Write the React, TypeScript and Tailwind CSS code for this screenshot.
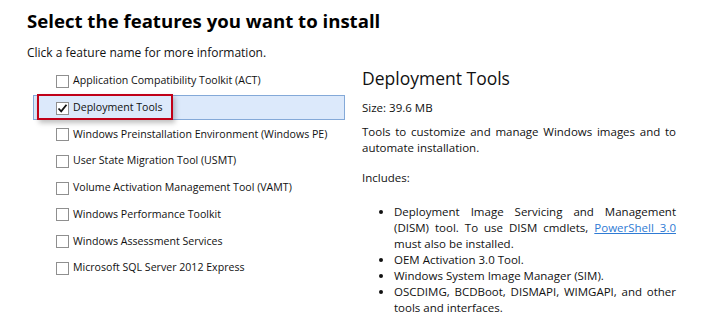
const features = [
  "Application Compatibility Toolkit (ACT)",
  "Deployment Tools",
  "Windows Preinstallation Environment (Windows PE)",
  "User State Migration Tool (USMT)",
  "Volume Activation Management Tool (VAMT)",
  "Windows Performance Toolkit",
  "Windows Assessment Services",
  "Microsoft SQL Server 2012 Express",
]

function CheckBox({ checked }: { checked: boolean }) {
  return (
    <span className="flex h-[13px] w-[13px] shrink-0 items-center justify-center border border-[#8f8f8f] bg-white">
      {checked && (
        <svg width="11" height="11" viewBox="0 0 11 11">
          <path d="M1.5 5.5 L4.2 8.3 L9.5 1.8" fill="none" stroke="#111" strokeWidth="1.8" />
        </svg>
      )}
    </span>
  )
}

export default function App() {
  return (
    <div
      className="h-[317px] w-[704px] overflow-hidden bg-white text-[#111]"
      style={{ fontFamily: '"Open Sans", "Noto Sans", sans-serif' }}
    >
      <div className="pl-[27px] pt-[8px]">
        <h1 className="text-[18.6px] font-bold leading-[26px] text-black">
          Select the features you want to install
        </h1>
        <p className="mt-[11px] text-[12px] leading-[16px]">
          Click a feature name for more information.
        </p>
      </div>

      <div className="mt-[7px] flex">
        <ul className="ml-[33px] w-[312px]">
          {features.map((name, i) => {
            const selected = i === 1
            return (
              <li key={name} className="relative flex h-[26.7px] items-center">
                {selected && (
                  <>
                    <div className="absolute inset-x-0 top-[0px] h-[25px] border border-[#84a9d8] bg-[#dce9fb]" />
                    <div className="absolute left-[4px] top-[-1px] h-[26px] w-[136px] border-2 border-[#c00018] shadow-[2px_3px_5px_rgba(0,0,0,0.25)]" />
                  </>
                )}
                <div className="relative flex items-center gap-[4px] whitespace-nowrap pl-[23px] text-[10.6px]">
                  <CheckBox checked={selected} />
                  <span>{name}</span>
                </div>
              </li>
            )
          })}
        </ul>

        <div className="ml-[17px] w-[314px] text-[11.5px] leading-[16px]">
          <h2 className="mt-[-2px] text-[17.5px] leading-[24px]">Deployment Tools</h2>
          <p className="mt-[10px]">Size: 39.6 MB</p>
          <p className="mt-[8px] text-justify">
            Tools to customize and manage Windows images and to automate installation.
          </p>
          <p className="mt-[14px]">Includes:</p>
          <ul className="mt-[18px] list-disc pl-[32px] text-justify">
            <li>
              Deployment Image Servicing and Management (DISM) tool. To use DISM cmdlets,{" "}
              <span className="text-[#2f7bd4] underline underline-offset-[1px]">PowerShell 3.0</span> must also be installed.
            </li>
            <li>OEM Activation 3.0 Tool.</li>
            <li>Windows System Image Manager (SIM).</li>
            <li>OSCDIMG, BCDBoot, DISMAPI, WIMGAPI, and other tools and interfaces.</li>
          </ul>
        </div>
      </div>
    </div>
  )
}
